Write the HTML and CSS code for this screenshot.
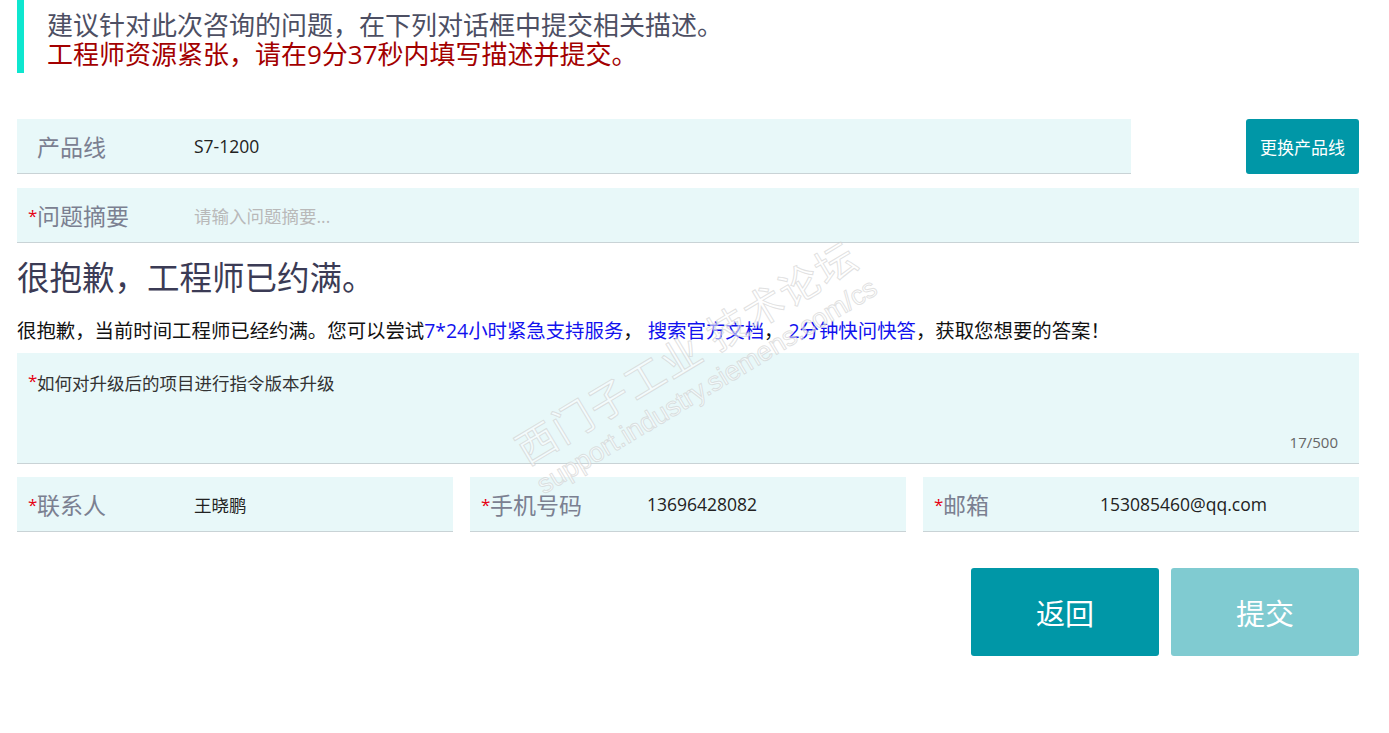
FILE: index.html
```html
<!DOCTYPE html>
<html lang="zh-CN">
<head>
  <meta charset="UTF-8">
  <meta name="viewport" content="width=device-width, initial-scale=1">
  <title>提交问题描述</title>
  <link rel="stylesheet" href="styles.css">
</head>
<body>
  <div class="page">
    <!-- countdown notice -->
    <div class="notice">
      <p>建议针对此次咨询的问题，在下列对话框中提交相关描述。</p>
      <p class="notice-warn">工程师资源紧张，请在9分37秒内填写描述并提交。</p>
    </div>

    <div class="row-product">
      <div class="field">
        <label class="field-label">产品线</label>
        <span class="field-value">S7-1200</span>
      </div>
      <button class="btn-change">更换产品线</button>
    </div>

    <div class="field field-summary">
      <label class="field-label"><i class="req">*</i>问题摘要</label>
      <span class="field-placeholder">请输入问题摘要...</span>
    </div>

    <h2 class="full-title">很抱歉，工程师已约满。</h2>
    <p class="full-tip">很抱歉，当前时间工程师已经约满。您可以尝试<a href="#">7*24小时紧急支持服务</a>，&nbsp;<a href="#">搜索官方文档</a>，&nbsp;<a href="#">2分钟快问快答</a>，获取您想要的答案！</p>

    <div class="desc">
      <div class="desc-text"><i class="req">*</i>如何对升级后的项目进行指令版本升级</div>
      <div class="desc-count">17/500</div>
    </div>

    <div class="contacts">
      <div class="field">
        <label class="field-label"><i class="req">*</i>联系人</label>
        <span class="field-value">王晓鹏</span>
      </div>
      <div class="field">
        <label class="field-label"><i class="req">*</i>手机号码</label>
        <span class="field-value">13696428082</span>
      </div>
      <div class="field">
        <label class="field-label"><i class="req">*</i>邮箱</label>
        <span class="field-value">153085460@qq.com</span>
      </div>
    </div>

    <div class="actions">
      <button class="btn-big">返回</button>
      <button class="btn-big btn-disabled">提交</button>
    </div>

    <!-- forum watermark -->
    <div class="watermark">
      <div class="wm-cn">西门子工业 技术论坛</div>
      <div class="wm-url">support.industry.siemens.com/cs</div>
    </div>
  </div>
</body>
</html>
```

FILE: styles.css
```css
:root {
  --teal: #0097a7;
  --teal-light: #80cbd1;
  --field-bg: #e8f8f9;
  --field-line: #c9d3d6;
  --label: #7b8091;
}
* { margin:0; padding:0; box-sizing:border-box; }
body {
  font-family: "Open Sans", "Noto Sans CJK SC", sans-serif;
  background:#fff; color:#222;
}
.page { position:relative; padding:0 30px 0 17px; }

.notice {
  border-left:7px solid #0ee6cf;
  padding:11px 0 0 23px;
  height:73px;
  font-size:26px; line-height:29px;
  color:#4d4f63;
}
.notice-warn { color:#a30000; }

.field {
  display:flex; align-items:center;
  height:55px;
  background:var(--field-bg);
  border-bottom:1px solid var(--field-line);
}
.field-label {
  width:177px; flex:none;
  padding-left:20px;
  font-size:23px; color:var(--label);
}
.req {
  display:inline-block; width:9px; margin-left:-9px;
  font-style:normal; font-size:17px; color:#e60012;
  vertical-align:3px;
}
.field-value { font-size:17.5px; color:#222; }
.field-placeholder { font-size:17.5px; color:#b9b9b9; }

.row-product { display:flex; gap:115px; margin-top:46px; }
.row-product .field { flex:1; }
.btn-change {
  width:113px; height:55px;
  background:var(--teal); color:#fff;
  border:none; border-radius:3px;
  font-family:inherit; font-size:17px;
}
.field-summary { margin-top:14px; }

.full-title {
  margin-top:15px;
  font-size:32.5px; line-height:40px; font-weight:normal;
  color:#3b3b55;
}
.full-tip {
  margin-top:21px;
  font-size:19.4px; line-height:24px; color:#111;
}
.full-tip a { color:#1212ee; text-decoration:none; }

.desc {
  display:flex; flex-direction:column; justify-content:space-between;
  height:111px; margin-top:10px;
  padding:16px 21px 11px 20px;
  background:var(--field-bg);
  border-bottom:1px solid var(--field-line);
}
.desc-text { font-size:17.5px; line-height:24px; color:#333; }
.desc-count { align-self:flex-end; font-size:15px; line-height:20px; color:#666; }

.contacts {
  display:grid; grid-template-columns:repeat(3, 1fr);
  gap:17px; margin-top:13px;
}

.actions { display:flex; justify-content:flex-end; gap:12px; margin-top:36px; }
.btn-big {
  width:188px; height:88px;
  background:var(--teal); color:#fff;
  border:none; border-radius:3px;
  font-family:inherit; font-size:29px;
}
.btn-disabled { background:var(--teal-light); }

.watermark {
  position:absolute; left:696px; top:368px;
  transform:translate(-50%, -50%) rotate(-31deg);
  text-align:center; white-space:nowrap;
  pointer-events:none;
  color:rgba(255,255,255,0.55);
  -webkit-text-stroke:1px rgba(200,200,200,0.55);
}
.wm-cn { font-size:40px; line-height:42px; letter-spacing:2px; }
.wm-url { font-family:"Liberation Sans", sans-serif; font-size:27px; line-height:36px; }
```
